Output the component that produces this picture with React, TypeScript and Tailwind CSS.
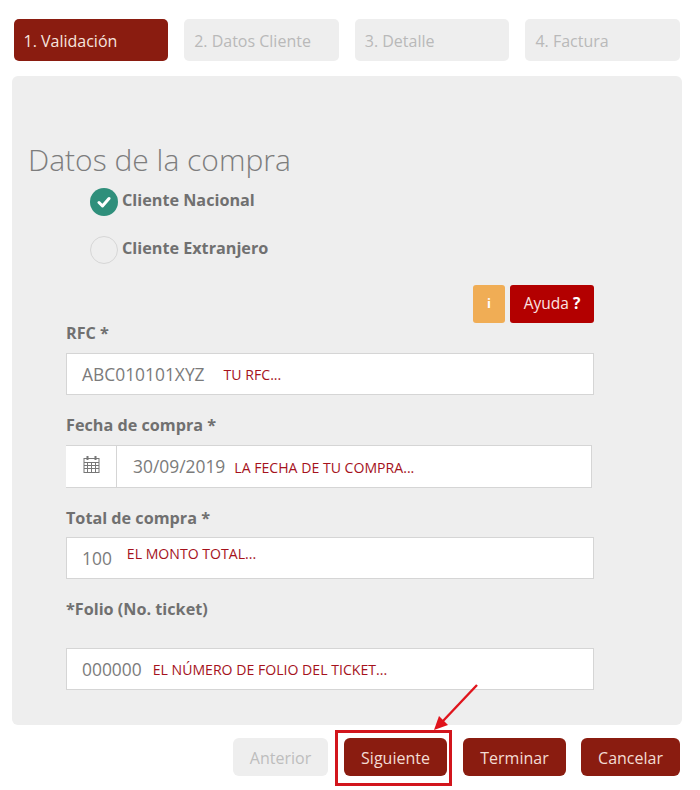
import React from "react";

const font = { fontFamily: '"Open Sans", "Noto Sans", sans-serif' };

function Step({ label, active }: { label: string; active?: boolean }) {
  return (
    <div
      className={
        active
          ? "h-[42px] flex items-center pl-[10px] pt-[1px] rounded-[5px] bg-[#8a1c10] text-[#f6e4df] text-base"
          : "h-[42px] flex items-center pl-[10px] pt-[1px] rounded-[5px] bg-[#eeeeee] text-[#b9b9b9] text-base"
      }
    >
      {label}
    </div>
  );
}

function Label({ children, className }: { children: React.ReactNode; className: string }) {
  return <div className={"text-[16.2px] leading-5 font-bold text-[#707070] " + className}>{children}</div>;
}

function Hint({ children, className }: { children: React.ReactNode; className: string }) {
  return <span className={"text-[14.1px] leading-5 text-[#a5121c] " + className}>{children}</span>;
}

function Action({ children, disabled, className }: { children: React.ReactNode; disabled?: boolean; className: string }) {
  return (
    <div
      className={
        "h-[38px] flex items-center justify-center pt-[1px] rounded-[6px] text-base " +
        (disabled ? "bg-[#eeeeee] text-[#bdbdbd] " : "bg-[#8a1c10] text-[#f3dcd4] ") +
        className
      }
    >
      {children}
    </div>
  );
}

export default function App() {
  return (
    <div className="w-[700px] h-[790px] bg-white overflow-hidden" style={font}>
      <div className="grid grid-cols-4 gap-4 pl-[13.5px] pr-5 pt-[19px]">
        <Step label="1. Validación" active />
        <Step label="2. Datos Cliente" />
        <Step label="3. Detalle" />
        <Step label="4. Factura" />
      </div>

      <div className="ml-3 mt-[15px] w-[670px] h-[649px] rounded-[6px] bg-[#eeeeee] pt-[63px]">
        <h2 className="pl-4 text-[30px] leading-[42px] font-light text-[#7d7d7d]">Datos de la compra</h2>

        <div className="pl-[78px] flex flex-col gap-5 mt-[7px]">
          <div className="flex items-center gap-1 h-[28px]">
            <div className="w-7 h-7 rounded-full bg-[#2f8f7b] flex items-center justify-center">
              <svg width="14" height="12" viewBox="0 0 14 12" fill="none">
                <path d="M2 6.5 L5.5 10 L12 2.5" stroke="#ffffff" strokeWidth="3" strokeLinecap="round" strokeLinejoin="round" />
              </svg>
            </div>
            <span className="text-[16.2px] font-bold text-[#707070] -mt-[3px]">Cliente Nacional</span>
          </div>
          <div className="flex items-center gap-1 h-[28px]">
            <div className="w-7 h-7 rounded-full border border-[#d6d6d6]" />
            <span className="text-[16.2px] font-bold text-[#707070] -mt-[3px]">Cliente Extranjero</span>
          </div>
        </div>

        <div className="ml-[54px] w-[528px] mt-[21px]">
          <div className="flex justify-end gap-[5px] h-[38px]">
            <div className="w-8 rounded-[3px] bg-[#f0ad55] flex items-center justify-center text-white text-[13px] font-bold">i</div>
            <div className="w-[84px] rounded-[3px] bg-[#b30000] flex items-center justify-center gap-1 text-[#fbe3e3] text-[15.5px]">
              Ayuda <span className="font-bold text-white">?</span>
            </div>
          </div>

          <Label className="">RFC *</Label>
          <div className="mt-[10px] h-[42px] bg-white border border-[#d5d5d5] flex items-center pl-[15px]">
            <span className="text-[17.4px] text-[#7b7b7b]">ABC010101XYZ</span>
            <Hint className="ml-[19px] mt-[2px]">TU RFC...</Hint>
          </div>

          <Label className="mt-5">Fecha de compra *</Label>
          <div className="mt-[10px] w-[526px] h-[43px] bg-white border border-[#d5d5d5] border-l-0 flex items-center">
            <div className="w-[51px] h-full flex items-center justify-center border-r border-[#d5d5d5] pb-[4px]">
              <svg width="17" height="19" viewBox="0 0 17 19" fill="none" stroke="#777777" strokeWidth="1">
                <rect x="1" y="3.5" width="15" height="14" fill="#ffffff" />
                <path d="M1 7.5H16M1 10.5H16M1 13.5H16M4.5 7.5V17.5M8.5 7.5V17.5M12.5 7.5V17.5" />
                <path d="M4.5 1V5M12.5 1V5" strokeWidth="2" />
              </svg>
            </div>
            <span className="ml-4 text-[17.4px] text-[#7b7b7b]">30/09/2019</span>
            <Hint className="ml-[9px] mt-[3px]">LA FECHA DE TU COMPRA...</Hint>
          </div>

          <Label className="mt-5">Total de compra *</Label>
          <div className="mt-[9px] h-[42px] bg-white border border-[#d5d5d5] flex pl-[15px] items-center">
            <span className="text-[17.4px] text-[#7b7b7b] mt-[1px]">100</span>
            <Hint className="ml-[15px] -mt-[9px]">EL MONTO TOTAL...</Hint>
          </div>

          <Label className="mt-[20px]">*Folio (No. ticket)</Label>
          <div className="mt-[29px] h-[42px] bg-white border border-[#d5d5d5] flex pl-[15px] items-center">
            <span className="text-[17.4px] text-[#7b7b7b]">000000</span>
            <Hint className="ml-[11px] mt-[1px]">EL NÚMERO DE FOLIO DEL TICKET...</Hint>
          </div>
        </div>
      </div>

      <div className="flex justify-end pr-5 mt-[13px] gap-4">
        <Action disabled className="w-[95px]">Anterior</Action>
        <div className="relative">
          <Action className="w-[103px]">Siguiente</Action>
          <div className="absolute -left-[9px] -top-[8px] w-[117px] h-[56px] border-[3px] border-[#d2151c]" />
          <svg className="absolute left-[87px] -top-[54px]" width="50" height="50" viewBox="0 0 50 50" fill="none">
            <path d="M46 1 L12 37" stroke="#e0141c" strokeWidth="2.4" />
            <path d="M3 46 L8 32 L17 41 Z" fill="#e0141c" />
          </svg>
        </div>
        <Action className="w-[103px]">Terminar</Action>
        <Action className="w-[99px] -ml-px">Cancelar</Action>
      </div>
    </div>
  );
}
